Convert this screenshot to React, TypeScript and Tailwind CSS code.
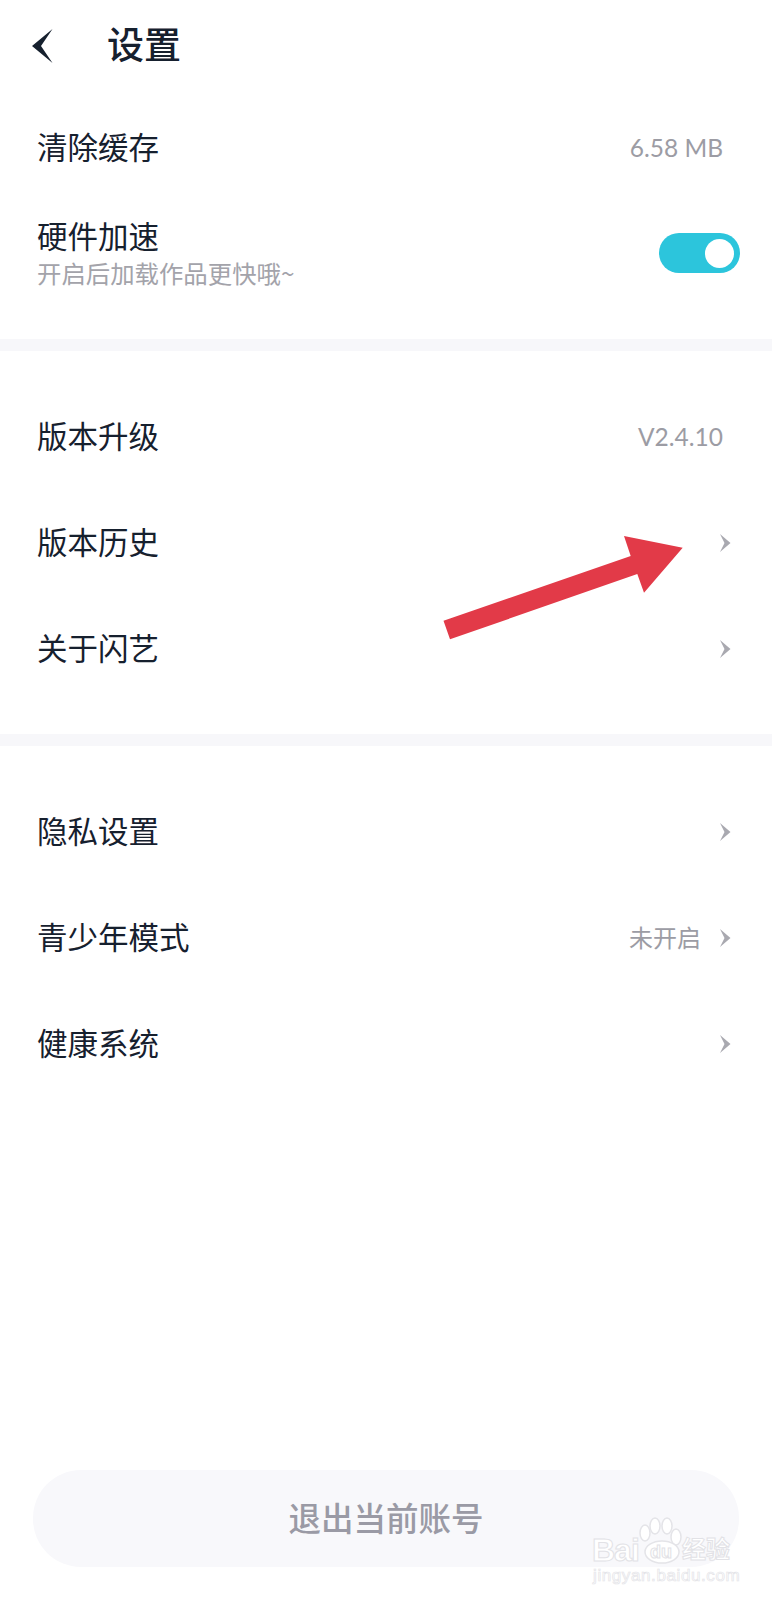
const cjk = "font-['Noto_Sans_CJK_SC','Noto_Sans',sans-serif]";

const Chevron = () => (
  <svg width="11" height="18" viewBox="0 0 11 18" className="shrink-0 text-[#a9a9b0]">
    <polygon points="0,0 10.5,9 0,18 4.5,9" fill="currentColor" />
  </svg>
);

const Row = ({ label, children }: { label: string; children?: React.ReactNode }) => (
  <div className="flex h-[106px] items-center justify-between pl-[37px] pr-[41px]">
    <span className="pb-[3px] text-[30.5px] leading-none text-[#16202e]">{label}</span>
    {children}
  </div>
);

const Value = ({ text }: { text: string }) => (
  <span className="pr-2 font-['Lato',sans-serif] text-[24.5px] leading-none text-[#9c9ca4]">{text}</span>
);

const Watermark = () => (
  <div className="pointer-events-none absolute left-[592px] top-[1516px] h-[68px] w-[142px] text-white">
    <svg width="142" height="50" viewBox="0 0 142 50" className="absolute left-0 top-0" fill="#fff" stroke="#e4e4e8" strokeWidth="1.5">
      <ellipse cx="53" cy="17" rx="5" ry="8" />
      <ellipse cx="63" cy="10" rx="5" ry="8" />
      <ellipse cx="75" cy="10" rx="5" ry="8" />
      <ellipse cx="84" cy="21" rx="5" ry="8" />
      <ellipse cx="70" cy="36" rx="17" ry="11" />
    </svg>
    <span className="absolute left-0 top-[18px] font-['Liberation_Sans',sans-serif] text-[32px] font-bold leading-none tracking-[-1px] text-white [-webkit-text-stroke:1px_#e2e2e6]">
      Bai
    </span>
    <span className="absolute left-[58px] top-[27px] font-['Liberation_Sans',sans-serif] text-[18px] font-bold leading-none text-white [-webkit-text-stroke:1px_#e2e2e6]">
      du
    </span>
    <span className="absolute left-[90px] top-[20px] text-[24px] font-bold leading-none text-white [-webkit-text-stroke:1px_#e2e2e6]">
      经验
    </span>
    <span className="absolute left-[1px] top-[51px] font-['Liberation_Sans',sans-serif] text-[17px] leading-none tracking-[0.6px] text-white [-webkit-text-stroke:0.7px_#e4e4e8]">
      jingyan.baidu.com
    </span>
  </div>
);

export default function App() {
  return (
    <div className={`relative flex h-[1600px] w-[772px] flex-col overflow-hidden bg-white ${cjk}`}>
      {/* Header */}
      <div className="flex h-[95px] items-center pl-[32px]">
        <svg width="21" height="34" viewBox="0 0 21 34" className="mb-[3px] shrink-0 text-[#16202e]">
          <polygon points="20.5,0 0,17 20.5,34 9,17" fill="currentColor" />
        </svg>
        <h1 className="ml-[54px] pb-[8px] text-[37px] font-medium leading-none text-[#16202e]">设置</h1>
      </div>

      {/* Cache and acceleration */}
      <div className="box-border flex h-[98px] items-center justify-between pl-[37px] pr-[41px] pt-[8px]">
        <span className="pb-[4px] text-[30.5px] leading-none text-[#16202e]">清除缓存</span>
        <Value text="6.58 MB" />
      </div>
      <div className="flex h-[146px] items-start justify-between pl-[37px] pr-[32px] pt-[27px]">
        <div className="flex flex-col">
          <span className="text-[30.5px] leading-none text-[#16202e]">硬件加速</span>
          <span className="mt-[10px] text-[24.4px] leading-none text-[#a3a3aa]">开启后加载作品更快哦~</span>
        </div>
        <div className="mt-[13px] flex h-[40px] w-[81px] items-center justify-end rounded-full bg-[#2cc5dc] pr-[6px]">
          <div className="h-[29px] w-[29px] rounded-full bg-white" />
        </div>
      </div>
      <div className="h-[12px] bg-[#f7f7fa]" />

      {/* Version */}
      <div className="pb-[32px] pt-[33px]">
        <Row label="版本升级">
          <Value text="V2.4.10" />
        </Row>
        <Row label="版本历史">
          <Chevron />
        </Row>
        <Row label="关于闪艺">
          <Chevron />
        </Row>
      </div>
      <div className="h-[12px] bg-[#f7f7fa]" />

      {/* Privacy */}
      <div className="pt-[33px]">
        <Row label="隐私设置">
          <Chevron />
        </Row>
        <Row label="青少年模式">
          <div className="flex items-center gap-[19px]">
            <span className="pb-[2px] text-[24px] leading-none text-[#9c9ca4]">未开启</span>
            <Chevron />
          </div>
        </Row>
        <Row label="健康系统">
          <Chevron />
        </Row>
      </div>

      {/* Logout */}
      <div className="mx-[33px] mb-[33px] mt-auto flex h-[97px] items-center justify-center rounded-[48px] bg-[#f8f8fb]">
        <span className="pb-[2px] text-[32.5px] font-medium leading-none text-[#9a9aa5]">退出当前账号</span>
      </div>

      {/* Annotation arrow */}
      <svg width="772" height="1600" viewBox="0 0 772 1600" className="pointer-events-none absolute left-0 top-0">
        <polygon
          points="443.5,620.7 450,639.3 637.3,574 644,592.7 682.7,547.7 624,536 630.7,556"
          fill="#e23a48"
        />
      </svg>

      <Watermark />
    </div>
  );
}
